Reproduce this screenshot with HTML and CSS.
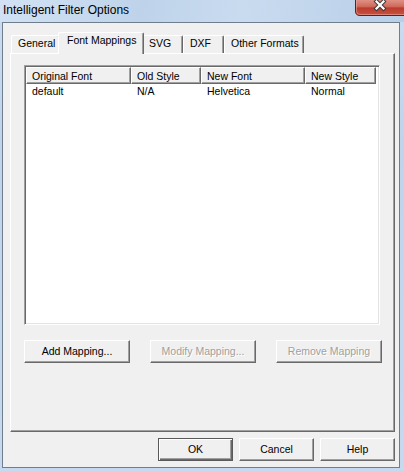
FILE: index.html
```html
<!DOCTYPE html>
<html>
<head>
<meta charset="utf-8">
<link rel="stylesheet" href="styles.css">
</head>
<body>
<div class="screen">
  <div class="titlebar">
    <span class="title">Intelligent Filter Options</span>
    <svg class="close" width="49" height="16" viewBox="0 0 49 16">
      <defs>
        <linearGradient id="cg" x1="0" y1="0" x2="0" y2="1">
          <stop offset="0" stop-color="#e0968a"/>
          <stop offset="0.45" stop-color="#d06a5c"/>
          <stop offset="0.55" stop-color="#bb3b2b"/>
          <stop offset="1" stop-color="#c85444"/>
        </linearGradient>
      </defs>
      <path d="M0.5 -1 V11 Q0.5 15.5 5 15.5 H50 V-1 Z" fill="url(#cg)" stroke="#5e2119" stroke-width="1"/>
      <path d="M1.5 0 V11 Q1.5 14.5 5 14.5 H50" fill="none" stroke="#f0b6ac" stroke-opacity="0.5" stroke-width="1"/>
      <path d="M21.5 1.5 L28.5 8.5 M28.5 1.5 L21.5 8.5" stroke="#3c3c3c" stroke-width="4.2" stroke-linecap="square" fill="none"/>
      <path d="M21.5 1.5 L28.5 8.5 M28.5 1.5 L21.5 8.5" stroke="#ffffff" stroke-width="2.2" stroke-linecap="square" fill="none"/>
    </svg>
  </div>
  <div class="client">
    <div class="tabs">
      <div class="tab w-general">General</div>
      <div class="tab sel w-font">Font Mappings</div>
      <div class="tab w-svg">SVG</div>
      <div class="tab w-dxf">DXF</div>
      <div class="tab w-other">Other Formats</div>
    </div>
    <div class="panel">
      <div class="list">
        <div class="hdr">
          <div class="hcell c1">Original Font</div>
          <div class="hcell c2">Old Style</div>
          <div class="hcell c3">New Font</div>
          <div class="hcell c4">New Style</div>
        </div>
        <div class="row">
          <div class="cell c1">default</div>
          <div class="cell c2">N/A</div>
          <div class="cell c3">Helvetica</div>
          <div class="cell c4">Normal</div>
        </div>
      </div>
      <div class="btnrow">
        <div class="btn wide">Add Mapping...</div>
        <div class="btn wide disabled">Modify Mapping...</div>
        <div class="btn wide disabled">Remove Mapping</div>
      </div>
    </div>
    <div class="footer">
      <div class="btn std default">OK</div>
      <div class="btn std">Cancel</div>
      <div class="btn std">Help</div>
    </div>
  </div>
</div>
</body>
</html>
```

FILE: styles.css
```css
html, body {
  margin: 0;
  padding: 0;
}
body {
  width: 404px;
  height: 471px;
  overflow: hidden;
  background: linear-gradient(to bottom, #cadcf1 0%, #bfd4eb 30%, #c6d9ee 100%);
  font-family: "Liberation Sans", Arial, sans-serif;
  font-size: 10.5px;
  color: #000;
}
.screen {
  width: 404px;
  height: 471px;
  position: relative;
  overflow: hidden;
}
.titlebar {
  height: 22px;
  box-sizing: border-box;
  padding: 3px 0 0 3px;
  background: linear-gradient(100deg, #d2e2f4 0%, #bed3ea 35%, #c9dbef 60%, #b9cfe8 100%);
}
.title {
  font-size: 12px;
  line-height: 15px;
  color: #000;
}
.close {
  position: absolute;
  left: 355px;
  top: 0;
  display: block;
  z-index: 2;
}
.client {
  margin-left: 2px;
  width: 398px;
  height: 446px;
  box-sizing: border-box;
  border: 1px solid #707d8c;
  background: #f0f0f0;
}
.tabs {
  display: flex;
  align-items: flex-end;
  height: 21px;
  margin-top: 9px;
  padding-left: 8px;
}
.tab {
  height: 18px;
  box-sizing: border-box;
  padding: 1px 0 0 6px;
  line-height: 13px;
  white-space: nowrap;
  border-top: 1px solid #ffffff;
  border-left: 1px solid #ffffff;
  border-right: 1px solid #696969;
  box-shadow: inset -1px 0 #a0a0a0;
  border-radius: 2px 2px 0 0;
  background: #f0f0f0;
}
.tab.sel {
  height: 22px;
  margin: 0 -2px -1px -2px;
  padding-left: 8px;
  position: relative;
  z-index: 1;
}
.w-general { width: 49px; }
.w-font { width: 86px; }
.w-svg { width: 41px; }
.w-dxf { width: 41px; }
.w-other { width: 80px; }

.panel {
  margin-left: 7px;
  width: 385px;
  height: 379px;
  box-sizing: border-box;
  border-top: 1px solid #ffffff;
  border-left: 1px solid #ffffff;
  border-right: 1px solid #696969;
  border-bottom: 1px solid #696969;
  box-shadow: inset -1px -1px #a0a0a0;
  background: #f0f0f0;
  padding: 11px 0 0 13px;
}
.list {
  width: 356px;
  height: 260px;
  box-sizing: border-box;
  background: #ffffff;
  border-top: 1px solid #a0a0a0;
  border-left: 1px solid #a0a0a0;
  border-right: 1px solid #ffffff;
  border-bottom: 1px solid #ffffff;
  box-shadow: inset 1px 1px #696969, inset -1px -1px #e3e3e3;
  padding: 1px;
}
.hdr, .row {
  display: flex;
}
.hcell {
  height: 17px;
  box-sizing: border-box;
  padding: 2px 0 0 5px;
  line-height: 13px;
  white-space: nowrap;
  background: #f0f0f0;
  border-top: 1px solid #ffffff;
  border-left: 1px solid #ffffff;
  border-right: 1px solid #696969;
  border-bottom: 1px solid #696969;
  box-shadow: inset -1px -1px #a0a0a0;
}
.cell {
  box-sizing: border-box;
  padding-left: 6px;
  padding-top: 1px;
  line-height: 13px;
  height: 14px;
  white-space: nowrap;
}
.c1 { width: 105px; }
.c2 { width: 70px; }
.c3 { width: 104px; }
.c4 { width: 71px; }

.btnrow {
  display: flex;
  gap: 20px;
  margin-top: 15px;
}
.btn {
  height: 23px;
  box-sizing: border-box;
  display: flex;
  align-items: center;
  justify-content: center;
  line-height: 13px;
  white-space: nowrap;
  background: #f0f0f0;
  border-top: 1px solid #ffffff;
  border-left: 1px solid #ffffff;
  border-right: 1px solid #696969;
  border-bottom: 1px solid #696969;
  box-shadow: inset -1px -1px #a0a0a0;
}
.btn.wide { width: 106px; }
.btn.std { width: 75px; }
.btn.disabled {
  color: #a0a0a0;
  text-shadow: 1px 1px #ffffff;
}
.btn.default {
  border: 1px solid #5a5a5a;
  box-shadow: inset 1px 1px #ffffff, inset -1px -1px #696969, inset -2px -2px #a0a0a0;
}
.footer {
  display: flex;
  justify-content: flex-end;
  gap: 6px;
  margin-top: 6px;
  padding-right: 4px;
}
```
